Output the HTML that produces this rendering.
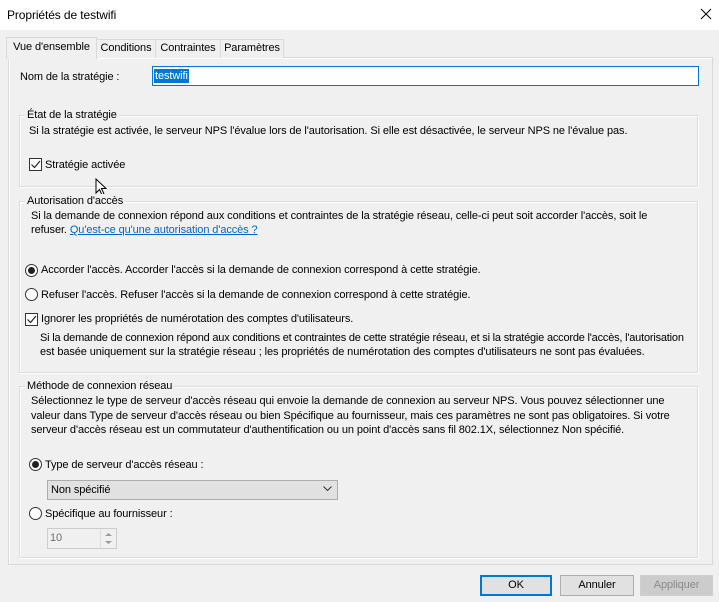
<!DOCTYPE html>
<html><head><meta charset="utf-8"><style>
*{margin:0;padding:0;box-sizing:border-box}
body{width:719px;height:602px;background:#f0f0f0;font-family:"Liberation Sans",sans-serif;font-size:11px;letter-spacing:-0.1px;color:#000;position:relative;overflow:hidden}
.a{position:absolute;white-space:nowrap;line-height:14px}
.grp{position:absolute;border:1px solid #dcdcdc;box-shadow:inset 1px 1px 0 #fff,1px 1px 0 #fff}
.lg{position:absolute;background:#f0f0f0;padding:0 2px;line-height:14px;white-space:nowrap}
.cb{position:absolute;width:13px;height:13px;border:1px solid #333;background:#fff}
.rb{position:absolute;width:13px;height:13px;border:1px solid #333;border-radius:50%;background:#fff}
.rb.on::after{content:"";position:absolute;left:2px;top:2px;width:7px;height:7px;border-radius:50%;background:#222}
.tab{position:absolute;top:39px;height:19px;border:1px solid #d9d9d9;border-bottom:none;background:#f0f0f0;line-height:17px;text-align:center}
.btn{position:absolute;top:575px;height:21px;border:1px solid #adadad;background:#e1e1e1;text-align:center;line-height:19px}
</style></head><body>
<div style="position:absolute;left:0;top:0;width:719px;height:30px;background:#fff"></div>
<div class="a" style="left:7px;top:8px;font-size:12px">Propriétés de testwifi</div>
<svg style="position:absolute;left:700px;top:8px" width="12" height="12"><path d="M1 1L11 11M11 1L1 11" stroke="#000" stroke-width="1"/></svg>

<div style="position:absolute;left:8px;top:57px;width:705px;height:508px;border:1px solid #d9d9d9;background:#f0f0f0;box-shadow:inset 1px 1px 0 #fff"></div>
<div class="tab" style="left:96px;width:60px">Conditions</div>
<div class="tab" style="left:155px;width:66px">Contraintes</div>
<div class="tab" style="left:220px;width:64px">Paramètres</div>
<div class="tab" style="left:6px;top:37px;height:22px;width:91px;background:#f0f0f0;border-color:#d9d9d9;line-height:19px;z-index:2">Vue d'ensemble</div>

<div class="a" style="left:20px;top:70px">Nom de la stratégie :</div>
<div style="position:absolute;left:152px;top:66px;width:547px;height:20px;border:1px solid #0078d7;background:#fff"></div>
<div class="a" style="left:154px;top:69px;background:#0078d7;color:#fff;padding:0 1px">testwifi</div>

<div class="grp" style="left:19px;top:115px;width:679px;height:72px"></div>
<div class="lg" style="left:25px;top:108px">État de la stratégie</div>
<div class="a" style="left:29px;top:124px">Si la stratégie est activée, le serveur NPS l'évalue lors de l'autorisation. Si elle est désactivée, le serveur NPS ne l'évalue pas.</div>
<div class="cb" style="left:29px;top:158px"><svg width="11" height="11" style="position:absolute;left:0;top:0"><path d="M1.5 5.5L4.5 8.5L10 2" stroke="#222" fill="none" stroke-width="1.2"/></svg></div>
<div class="a" style="left:45px;top:158px">Stratégie activée</div>
<svg style="position:absolute;left:95px;top:178px" width="12" height="19"><path d="M1 1L1 15L4.5 11.5L7 17L9 16L6.5 10.5L11 10.5Z" fill="#fff" stroke="#000"/></svg>

<div class="grp" style="left:19px;top:201px;width:679px;height:172px"></div>
<div class="lg" style="left:25px;top:194px">Autorisation d'accès</div>
<div class="a" style="left:31px;top:209px">Si la demande de connexion répond aux conditions et contraintes de la stratégie réseau, celle-ci peut soit accorder l'accès, soit le</div>
<div class="a" style="left:31px;top:223px">refuser. <span style="color:#0066cc;text-decoration:underline">Qu'est-ce qu'une autorisation d'accès ?</span></div>
<div class="rb on" style="left:25px;top:264px"></div>
<div class="a" style="left:41px;top:263px">Accorder l'accès. Accorder l'accès si la demande de connexion correspond à cette stratégie.</div>
<div class="rb" style="left:25px;top:288px"></div>
<div class="a" style="left:41px;top:288px">Refuser l'accès. Refuser l'accès si la demande de connexion correspond à cette stratégie.</div>
<div class="cb" style="left:25px;top:313px"><svg width="11" height="11" style="position:absolute;left:0;top:0"><path d="M1.5 5.5L4.5 8.5L10 2" stroke="#222" fill="none" stroke-width="1.2"/></svg></div>
<div class="a" style="left:41px;top:312px">Ignorer les propriétés de numérotation des comptes d'utilisateurs.</div>
<div class="a" style="left:40px;top:331px;letter-spacing:-0.2px">Si la demande de connexion répond aux conditions et contraintes de cette stratégie réseau, et si la stratégie accorde l'accès, l'autorisation</div>
<div class="a" style="left:40px;top:345px">est basée uniquement sur la stratégie réseau ; les propriétés de numérotation des comptes d'utilisateurs ne sont pas évaluées.</div>

<div class="grp" style="left:19px;top:386px;width:679px;height:172px"></div>
<div class="lg" style="left:25px;top:379px">Méthode de connexion réseau</div>
<div class="a" style="left:31px;top:394px">Sélectionnez le type de serveur d'accès réseau qui envoie la demande de connexion au serveur NPS. Vous pouvez sélectionner une</div>
<div class="a" style="left:31px;top:409px">valeur dans Type de serveur d'accès réseau ou bien Spécifique au fournisseur, mais ces paramètres ne sont pas obligatoires. Si votre</div>
<div class="a" style="left:31px;top:423px">serveur d'accès réseau est un commutateur d'authentification ou un point d'accès sans fil 802.1X, sélectionnez Non spécifié.</div>
<div class="rb on" style="left:29px;top:458px"></div>
<div class="a" style="left:45px;top:458px">Type de serveur d'accès réseau :</div>
<div style="position:absolute;left:47px;top:480px;width:291px;height:20px;border:1px solid #adadad;background:#e1e1e1"></div>
<div class="a" style="left:51px;top:483px">Non spécifié</div>
<svg style="position:absolute;left:323px;top:486px" width="9" height="6"><path d="M0.5 0.5L4.5 4.5L8.5 0.5" stroke="#333" fill="none"/></svg>
<div class="rb" style="left:29px;top:507px"></div>
<div class="a" style="left:45px;top:507px">Spécifique au fournisseur :</div>
<div style="position:absolute;left:47px;top:528px;width:70px;height:21px;border:1px solid #ccc;background:#f0f0f0"></div>
<div class="a" style="left:50px;top:531px;color:#6d6d6d">10</div>
<div style="position:absolute;left:100px;top:529px;width:16px;height:19px;border-left:1px solid #ddd"></div>
<svg style="position:absolute;left:104px;top:532px" width="9" height="14"><path d="M1 4L4.5 1L8 4Z M1 9L4.5 12L8 9Z" fill="#999"/></svg>

<div class="btn" style="left:480px;width:72px;border:2px solid #0078d7;line-height:17px">OK</div>
<div class="btn" style="left:560px;width:74px">Annuler</div>
<div class="btn" style="left:640px;width:73px;border-color:#cfcfcf;background:#cccccc;color:#8a8a8a">Appliquer</div>
</body></html>
